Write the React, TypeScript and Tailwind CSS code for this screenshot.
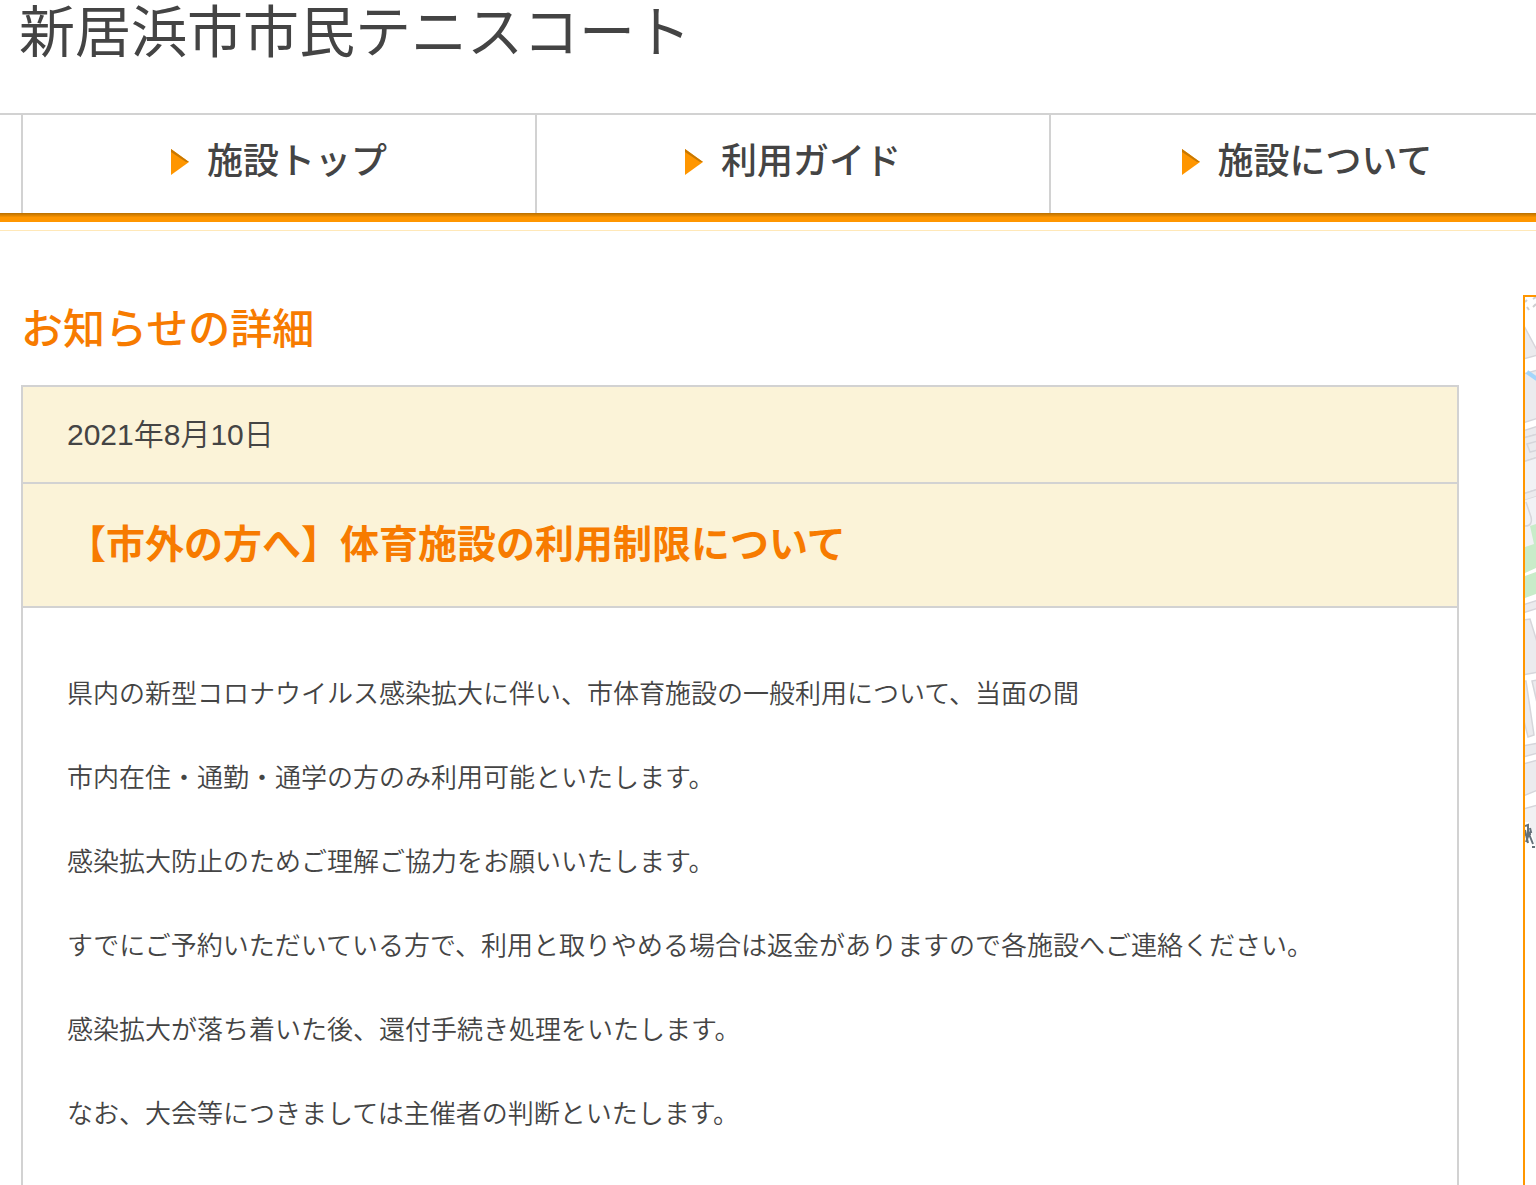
import React from 'react';

const navItems = ['施設トップ', '利用ガイド', '施設について'];

const paragraphs = [
  '県内の新型コロナウイルス感染拡大に伴い、市体育施設の一般利用について、当面の間',
  '市内在住・通勤・通学の方のみ利用可能といたします。',
  '感染拡大防止のためご理解ご協力をお願いいたします。',
  'すでにご予約いただいている方で、利用と取りやめる場合は返金がありますので各施設へご連絡ください。',
  '感染拡大が落ち着いた後、還付手続き処理をいたします。',
  'なお、大会等につきましては主催者の判断といたします。',
];

const ArrowIcon: React.FC = () => (
  <svg className="w-[18px] h-[26px] shrink-0" viewBox="0 0 18 26" aria-hidden="true">
    <path d="M0 0 18 13 0 26Z" fill="#ff9600" />
    <path d="M0 0 18 13 15 13 0 3Z" fill="#c87800" />
  </svg>
);

// Left edge of the facility map
const MapStrip: React.FC = () => (
  <svg className="block w-[11px] h-[552px]" viewBox="0 0 11 552" role="img" aria-label="地図">
    <g fill="#ebebee" stroke="#d6d6db" strokeWidth="1.500">
      <path d="M-2 27 13 55V58L-2 62Z" />
      <path d="M-2 77 13 73V121L-2 126Z" />
      <path d="M-2 134 13 129V137L-2 141Z" />
      <path d="M-2 141 13 137V160L-2 165Z" />
      <path d="M2 147 13 144V153L5 155Z" />
      <path d="M-2 165 13 160V192L-2 197Z" fill="#f1f2f5" />
      <path d="M-2 197 13 192V199L-2 204Z" />
      <path d="M-2 204 13 199V247L-2 251Z" fill="#f1f2f5" stroke="none" />
      <path d="M1 205 6 220Q8 229 0 229" fill="none" />
      <path d="M-2 308 13 303V311L-2 316Z" />
      <path d="M-2 323 5 322 13 348V375L-2 378Z" />
      <path d="M-2 384 1 384 9 438 3 440-2 420Z" />
      <path d="M7 384 13 383V410Z" />
      <path d="M-2 449 13 446V456L-2 460Z" />
      <path d="M-2 467 13 463V493L-2 499Z" />
      <path d="M-2 512 13 508V552H-2Z" fill="#f1f1f3" />
    </g>
    <path d="M5 229 11 227V271L0 276V250L9 247ZM0 279 11 275V297L0 301Z" fill="#c8ecc9" />
    <path d="M2 75 12 82" stroke="#a4d6fb" strokeWidth="4" />
    <path d="M0 5 2 3M8 2 11 0M2 10 4 13M8 10 11 7" stroke="#cfcfd2" strokeWidth="2" />
    <path d="M0 525H4L11 552H0Z" fill="#fff" />
    <path d="M0 529 3 528V536L6 535 5 531M0 538 6 537M1 545 4 537 8 547M0 533 3 546M7 550H10" fill="none" stroke="#65717a" strokeWidth="2" />
  </svg>
);

const App: React.FC = () => {
  return (
    <div className="min-h-screen flex flex-col overflow-hidden bg-white text-[#444] font-['Liberation_Sans','Noto_Sans_CJK_JP',sans-serif]">
      <header>
        <h1 className="h-[113px] pl-[19px] text-[56px] leading-[66px] whitespace-nowrap">
          新居浜市市民テニスコート
        </h1>
        <nav className="-mr-[27px] pl-[21px] border-t-2 border-[#d2d2d2]">
          <ul className="grid grid-cols-3">
            {navItems.map((item) => (
              <li key={item} className="border-l-2 border-[#d2d2d2]">
                <a href="#" className="h-[98px] pb-1 flex items-center justify-center gap-[18px] text-[36px] leading-[36px] font-medium">
                  <ArrowIcon />
                  {item}
                </a>
              </li>
            ))}
          </ul>
        </nav>
        <div className="h-[9px] bg-linear-to-b from-[#b97000] to-[#ff9600] to-50%" />
        <div className="h-[9px] border-b border-[#ffe8b8]" />
      </header>

      <div className="flex-1 flex gap-16 pl-[21px] pt-16">
        <main className="flex-1 flex flex-col">
          <h2 className="pt-2 pb-7 text-[42px] leading-[54px] font-medium text-[#f77b00]">お知らせの詳細</h2>
          <article className="flex-1 border-2 border-b-0 border-[#d2d2d2]">
            <p className="px-11 py-6 bg-[#fbf3d8] border-b-2 border-[#d2d2d2] text-[30px] leading-[47px] font-[350]">
              <time dateTime="2021-08-10">2021年8月10日</time>
            </p>
            <h3 className="px-11 py-8 bg-[#fbf3d8] border-b-2 border-[#d2d2d2] text-[39px] leading-[58px] font-bold text-[#f77b00]">
              【市外の方へ】体育施設の利用制限について
            </h3>
            <div className="px-11 pt-11 text-[26px] leading-[84px] font-[350]">
              {paragraphs.map((text) => (
                <p key={text}>{text}</p>
              ))}
            </div>
          </article>
        </main>
        <aside className="w-[13px] shrink-0 border-t-2 border-l-2 border-[#ff9600]">
          <MapStrip />
        </aside>
      </div>
    </div>
  );
};

export default App;
